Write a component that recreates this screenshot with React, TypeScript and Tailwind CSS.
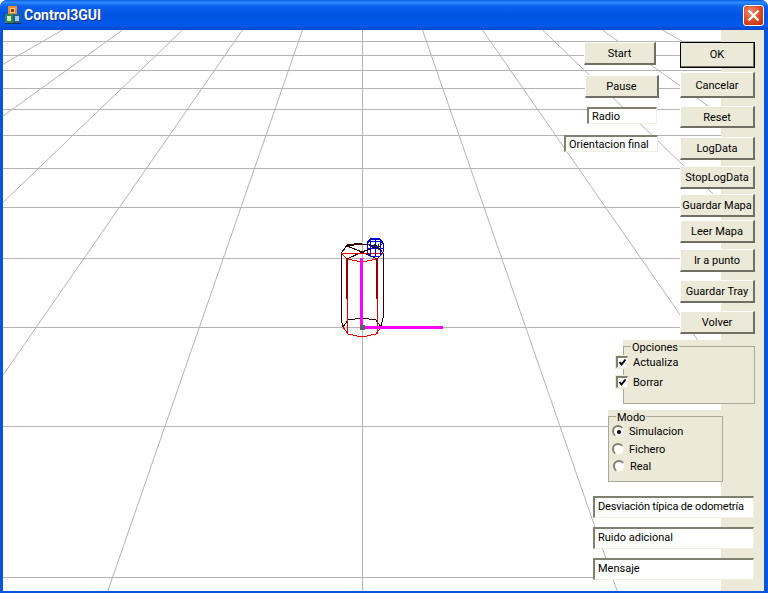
import React from 'react';

const hLines = [41, 55, 70, 88, 109, 135, 168, 207, 258, 327, 426, 577];
const kValues = [-8, -7, -6, -5, -4, -3, -2, -1, 0, 1, 2, 3, 4, 5, 6, 7, 8];

// ground grid plus the robot wireframe, drawn in page coordinates
function Scene() {
  return (
    <svg className="absolute inset-0 w-full h-full" viewBox="3 30 718 561" preserveAspectRatio="none">
      <g stroke="#b4b4b4" strokeWidth="1" fill="none">
        {hLines.map(y => (
          <line key={y} x1="3" y1={y + 0.5} x2="721" y2={y + 0.5} shapeRendering="crispEdges" />
        ))}
        {kValues.map(k => (
          <line key={k} x1={362.5 + k * 60} y1="30" x2={362.5 + k * 195 + k * 60} y2="592" />
        ))}
      </g>

      <g fill="none" stroke="#300000" strokeWidth="1" shapeRendering="crispEdges">
        <polyline points="341,253 341,318 343,327" />
        <polyline points="383,253 383,318 381,327" />
        <polyline points="341,253 347,246 362,244 377,246 383,253" />
        <polyline points="343,327 348,320 362,318 376,320 381,327" />
        <polyline points="347,246 362,252 377,259" />
        <polyline points="377,246 362,252 347,259" />
        <polyline points="342,252 347,245 362,243" />
      </g>
      <g fill="none" stroke="#e00000" strokeWidth="1" shapeRendering="crispEdges">
        <polyline points="341,253 347,259 362,262 377,259 383,253" />
        <polyline points="343,327 348,334 362,337 376,334 381,327" />
        <line x1="347" y1="259" x2="347" y2="334" />
        <line x1="377" y1="259" x2="377" y2="334" />
        <line x1="341" y1="253" x2="383" y2="253" />
      </g>
      <g stroke="#900000" strokeWidth="2" shapeRendering="crispEdges">
        <line x1="347" y1="258" x2="347" y2="299" />
        <line x1="377" y1="258" x2="377" y2="299" />
      </g>
      <g fill="none" stroke="#0000d0" strokeWidth="1" shapeRendering="crispEdges">
        <polyline points="367,243 370,239 375,238 380,239 383,243 383,252 380,256 375,257 370,256 367,252 367,243" />
        <polyline points="368,243 370,240 375,239 380,240 382,243" />
        <polyline points="367,243 370,246 375,247 380,246 383,243" />
        <polyline points="367,241 383,241" />
        <line x1="370" y1="239" x2="370" y2="256" />
        <line x1="375" y1="238" x2="375" y2="257" />
        <line x1="380" y1="239" x2="380" y2="256" />
        <line x1="367" y1="248" x2="383" y2="248" />
      </g>
      <g stroke="#202020" strokeWidth="1" shapeRendering="crispEdges">
        <line x1="374" y1="244" x2="379" y2="250" />
        <line x1="378" y1="244" x2="378" y2="250" />
      </g>

      <g fill="#ff00ff" shapeRendering="crispEdges">
        <rect x="360" y="258" width="3" height="69" />
        <rect x="362" y="326" width="81" height="3" />
      </g>
      <rect x="360" y="325" width="5" height="5" fill="#606060" shapeRendering="crispEdges" />
    </svg>
  );
}

function AppIcon() {
  return (
    <svg className="w-[16px] h-[18px]" viewBox="0 0 16 18" shapeRendering="crispEdges">
      <rect x="3" y="0" width="9" height="9" fill="#e88a3c" />
      <rect x="5" y="2" width="5" height="5" fill="#f8d080" />
      <rect x="6" y="3" width="3" height="3" fill="#a03010" />
      <rect x="0" y="8" width="8" height="9" fill="#2e8a50" />
      <rect x="2" y="10" width="4" height="5" fill="#d0f0c0" />
      <rect x="8" y="8" width="8" height="9" fill="#2b5f8a" />
      <rect x="10" y="10" width="4" height="5" fill="#a0d0f0" />
      <rect x="0" y="17" width="16" height="1" fill="#123060" />
    </svg>
  );
}

function CloseButton() {
  return (
    <div className="w-[21px] h-[21px] rounded-[3px] border border-white bg-[radial-gradient(circle_at_35%_30%,#ee8a6a,#d9431f_60%,#b8300f)] flex items-center justify-center">
      <svg className="w-[13px] h-[13px]" viewBox="0 0 13 13">
        <path d="M1.5 1.5 L11.5 11.5 M11.5 1.5 L1.5 11.5" stroke="#ffffff" strokeWidth="2.4" />
      </svg>
    </div>
  );
}

const btnClass =
  'w-full flex items-center justify-center bg-[#ece9d8] border-t border-l border-white border-r-2 border-b-2 border-r-[#716f64] border-b-[#716f64] text-black whitespace-nowrap';

const sunkenClass =
  'bg-white border-t-2 border-l-2 border-t-[#808070] border-l-[#808070] border-r border-b border-r-[#f1efe2] border-b-[#f1efe2] flex items-start pl-[3px] whitespace-nowrap text-black';

const sideButtons = [
  { label: 'Cancelar', cls: 'mt-[4px] h-[26px]' },
  { label: 'Reset', cls: 'mt-[8px] h-[22px]' },
  { label: 'LogData', cls: 'mt-[9px] h-[23px]' },
  { label: 'StopLogData', cls: 'mt-[6px] h-[23px]' },
  { label: 'Guardar Mapa', cls: 'mt-[5px] h-[23px]' },
  { label: 'Leer Mapa', cls: 'mt-[3px] h-[23px]' },
  { label: 'Ir a punto', cls: 'mt-[6px] h-[23px]' },
  { label: 'Guardar Tray', cls: 'mt-[8px] h-[23px]' },
  { label: 'Volver', cls: 'mt-[8px] h-[23px]' },
];

function Check({ label }: { label: string }) {
  return (
    <div className="flex items-center h-[14px] -ml-[9px]">
      <div className="w-[14px] h-[14px] bg-[#ece9d8] flex items-center justify-center">
        <div className="w-[12px] h-[12px] bg-white border-t-2 border-l-2 border-t-[#808070] border-l-[#808070] border-r border-b border-r-[#f1efe2] border-b-[#f1efe2]">
          <svg viewBox="0 0 9 9" className="w-[9px] h-[9px]">
            <path d="M1.5 4 L3.5 6.5 L7.5 1.5" fill="none" stroke="#000000" strokeWidth="2" />
          </svg>
        </div>
      </div>
      <span className="ml-[4px]">{label}</span>
    </div>
  );
}

function Radio({ label, on, cls }: { label: string; on?: boolean; cls: string }) {
  return (
    <div className={`flex items-center h-[14px] ${cls}`}>
      <div className="w-[12px] h-[12px] rounded-full bg-white border-t-2 border-l-2 border-t-[#808070] border-l-[#808070] border-r border-b border-r-[#f1efe2] border-b-[#f1efe2] flex items-center justify-center">
        {on && <div className="w-[4px] h-[4px] rounded-full bg-black" />}
      </div>
      <span className="ml-[5px]">{label}</span>
    </div>
  );
}

export default function App() {
  return (
    <div className="relative w-[768px] h-[593px] overflow-hidden bg-white text-[11px] leading-[13px] font-['Roboto',sans-serif]">
      <div className="flex flex-col h-full rounded-t-[7px] bg-[#0855dd]">
        <div className="h-[30px] shrink-0 flex items-center pl-[5px] pr-[4px] rounded-t-[7px] bg-[linear-gradient(180deg,#0a5fe0_0%,#2e8cff_8%,#0a63ee_20%,#0054e3_50%,#0058ea_85%,#0046c8_100%)]">
          <AppIcon />
          <span className="ml-[3px] text-white font-bold text-[14px] font-['Roboto',sans-serif] [text-shadow:1px_1px_0_#0f2f90]">
            Control3GUI
          </span>
          <div className="ml-auto">
            <CloseButton />
          </div>
        </div>
        <div className="flex-1 flex ml-[3px] mr-[4px] mb-[2px] min-h-0">
          <div className="relative w-[718px] bg-white overflow-hidden">
            <Scene />
          </div>
          <div className="flex-1 bg-[#ece9d8]" />
        </div>
      </div>

      {/* dialog controls lying over the 3D view */}
      <div className="absolute left-[680px] top-[42px] w-[75px] flex flex-col">
        <div className={`${btnClass} h-[26px] outline outline-1 -outline-offset-1 outline-black`}>OK</div>
        {sideButtons.map(b => (
          <div key={b.label} className={`${btnClass} pt-[1px] ${b.cls}`}>{b.label}</div>
        ))}
      </div>

      <div className={`${btnClass} absolute left-[584px] top-[42px] !w-[72px] h-[23px]`}>Start</div>
      <div className={`${btnClass} absolute left-[585px] top-[75px] !w-[74px] h-[23px]`}>Pause</div>
      <div className={`${sunkenClass} pt-[1px] absolute left-[587px] top-[107px] w-[70px] h-[17px]`}>Radio</div>
      <div className={`${sunkenClass} pt-[1px] absolute left-[564px] top-[135px] w-[94px] h-[17px]`}>Orientacion final</div>

      <div className="absolute left-[623px] top-[340px] w-[132px] h-[64px] bg-[#ece9d8] pt-[6px]">
        <div className="relative h-[58px] border border-[#aca899] pt-[8px] flex flex-col gap-[6px]">
          <span className="absolute left-[7px] -top-[6px] bg-[#ece9d8] px-px">Opciones</span>
          <Check label="Actualiza" />
          <Check label="Borrar" />
        </div>
      </div>

      <div className="absolute left-[608px] top-[410px] w-[115px] h-[72px] bg-[#ece9d8] pt-[6px]">
        <div className="relative h-[66px] border border-[#aca899] pt-[7px] pl-[3px] flex flex-col">
          <span className="absolute left-[7px] -top-[6px] bg-[#ece9d8] px-px">Modo</span>
          <Radio label="Simulacion" on cls="" />
          <Radio label="Fichero" cls="mt-[4px]" />
          <Radio label="Real" cls="mt-[3px] ml-px" />
        </div>
      </div>

      <div className="absolute left-[593px] top-[496px] w-[161px] flex flex-col gap-[9px]">
        <div className={`${sunkenClass} pt-[2px] h-[22px] tracking-[-0.17px]`}>Desviación típica de odometría</div>
        <div className={`${sunkenClass} pt-[2px] h-[22px]`}>Ruido adicional</div>
        <div className={`${sunkenClass} pt-[2px] h-[22px]`}>Mensaje</div>
      </div>
    </div>
  );
}
